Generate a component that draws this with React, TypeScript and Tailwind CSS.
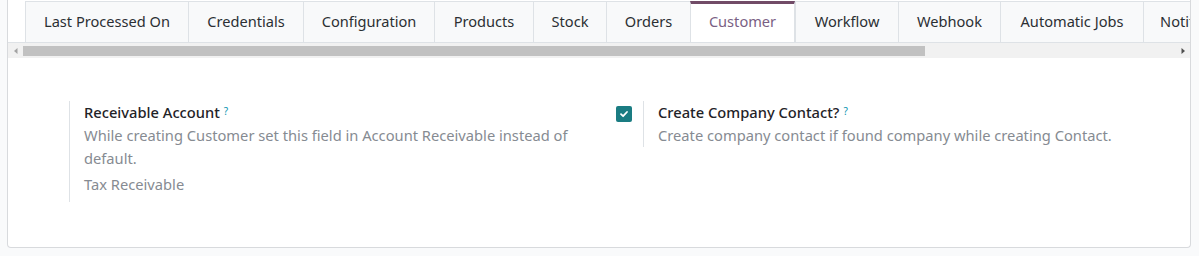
import React from "react";

const tabs: { label: string; w: string; active?: boolean }[] = [
  { label: "Last Processed On", w: "w-[163px]" },
  { label: "Credentials", w: "w-[115px]" },
  { label: "Configuration", w: "w-[131px]" },
  { label: "Products", w: "w-[99px]" },
  { label: "Stock", w: "w-[73px]" },
  { label: "Orders", w: "w-[84px]" },
  { label: "Customer", w: "w-[105px]", active: true },
  { label: "Workflow", w: "w-[103px]" },
  { label: "Webhook", w: "w-[102px]" },
  { label: "Automatic Jobs", w: "w-[143px]" },
  { label: "Notifications", w: "w-[120px]" },
];

function Help() {
  return (
    <sup className="ml-[4px] relative top-[-3px] text-[10px] text-[#0993b0] font-normal">?</sup>
  );
}

export default function App() {
  return (
    <div
      className="h-[256px] w-full bg-[#f9fafb] pl-[7px] pr-[8px] overflow-hidden"
      style={{ fontFamily: '"Noto Sans", "Open Sans", sans-serif' }}
    >
      <div className="h-[248px] bg-white border border-t-0 border-[#d8dadd] rounded-b-[4px] flex flex-col overflow-hidden">
        {/* Tabs */}
        <div className="pt-[1px] pl-[17px] border-b border-[#dee2e6] flex overflow-hidden whitespace-nowrap">
          {tabs.map((t) =>
            t.active ? (
              <div
                key={t.label}
                className={`${t.w} shrink-0 h-[41px] -mb-[1px] bg-white border-l border-r border-t-[3px] border-l-[#dee2e6] border-r-[#dee2e6] border-t-[#714b67] flex items-center justify-center text-[14.6px] text-[#7a5f84] pb-[2px]`}
              >
                {t.label}
              </div>
            ) : (
              <div
                key={t.label}
                className={`${t.w} shrink-0 h-[41px] bg-[#f8f9fa] border-l border-t border-[#dee2e6] flex items-center justify-center text-[14.6px] text-[#2b2f33]`}
              >
                {t.label}
              </div>
            )
          )}
        </div>
        {/* Scrollbar */}
        <div className="h-[15px] bg-[#f1f1f1] flex items-center relative">
          <div className="w-[15px] h-[15px] flex items-center justify-center">
            <svg width="6" height="8" viewBox="0 0 6 8">
              <path d="M4.5 1 L1 4 L4.5 7 Z" fill="#a3a3a3" />
            </svg>
          </div>
          <div className="w-[902px] h-[10px] bg-[#c1c1c1]" />
          <div className="flex-1" />
          <div className="w-[15px] h-[15px] flex items-center justify-center">
            <svg width="6" height="8" viewBox="0 0 6 8">
              <path d="M1.5 1 L5 4 L1.5 7 Z" fill="#505050" />
            </svg>
          </div>
        </div>
        {/* Content */}
        <div className="pt-[43px] pl-[21px] grid grid-cols-[574px_574px] items-start">
          <div className="flex">
            <div className="w-[40px] shrink-0" />
            <div className="border-l border-[#dee2e6] pl-[14px] pr-[18px] pb-[6px] text-[14.7px] leading-[23px]">
              <div className="text-[#1f2328] font-medium">
                Receivable Account
                <Help />
              </div>
              <div className="text-[#868b92]">
                While creating Customer set this field in Account Receivable instead of default.
              </div>
              <div className="text-[#868b92] mt-[3px]">Tax Receivable</div>
            </div>
          </div>
          <div className="flex">
            <div className="w-[40px] shrink-0 pt-[5px] pl-[13px]">
              <div className="w-[16px] h-[16px] rounded-[2px] bg-[#1a7c82] flex items-center justify-center">
                <svg width="10" height="10" viewBox="0 0 10 10">
                  <path d="M2 5.2 L4.1 7.2 L8 3" stroke="white" strokeWidth="1.8" fill="none" strokeLinecap="round" strokeLinejoin="round" />
                </svg>
              </div>
            </div>
            <div className="border-l border-[#dee2e6] pl-[14px] text-[14.7px] leading-[23px]">
              <div className="text-[#1f2328] font-medium">
                Create Company Contact?
                <Help />
              </div>
              <div className="text-[#868b92]">
                Create company contact if found company while creating Contact.
              </div>
            </div>
          </div>
        </div>
      </div>
    </div>
  );
}
